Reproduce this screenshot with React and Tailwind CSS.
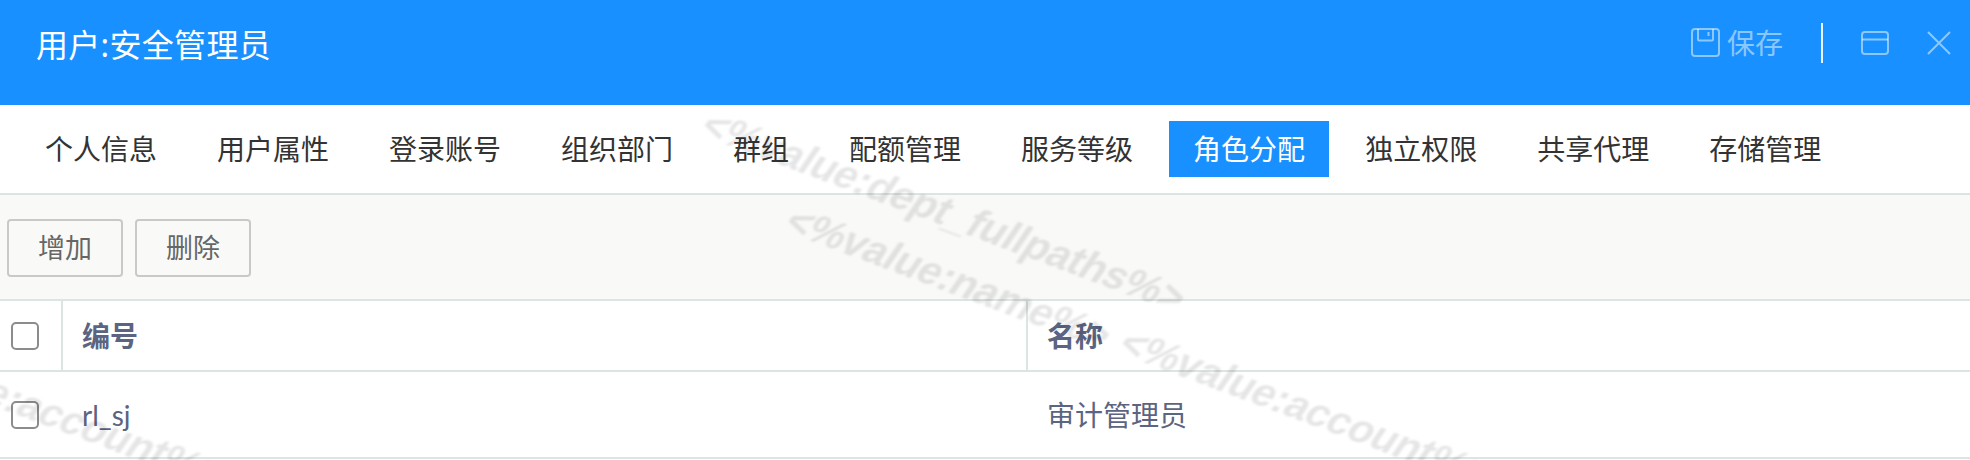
const FONT = "font-['Noto_Sans','Noto_Sans_CJK_SC',sans-serif]";

const tabs = ['个人信息', '用户属性', '登录账号', '组织部门', '群组', '配额管理', '服务等级', '角色分配', '独立权限', '共享代理', '存储管理'];

function SaveIcon() {
  return (
    <svg width="29" height="29" viewBox="0 0 29 29" fill="none" stroke="currentColor" strokeWidth="2">
      <rect x="1" y="1" width="27" height="27" rx="3" />
      <path d="M7 1v10.500a1 1 0 0 0 1 1h13a1 1 0 0 0 1-1V1" />
      <path d="M17.500 4v4" />
    </svg>
  );
}

function WindowIcon() {
  return (
    <svg width="28" height="24" viewBox="0 0 28 24" fill="none" stroke="currentColor" strokeWidth="2">
      <rect x="1" y="1" width="26" height="22" rx="3" />
      <path d="M1 8.500h26" />
    </svg>
  );
}

function CloseIcon() {
  return (
    <svg width="24" height="24" viewBox="0 0 24 24" fill="none" stroke="currentColor" strokeWidth="2">
      <path d="M1 1l22 22M23 1L1 23" />
    </svg>
  );
}

function CheckBox() {
  return <div className="w-[28px] h-[28px] rounded-[5px] border-2 border-[#8c8c8c] bg-transparent" />;
}

function Watermark({ className, children }) {
  return (
    <div className={`absolute origin-top-left rotate-[20.500deg] -skew-x-[14deg] whitespace-nowrap font-['Liberation_Sans',sans-serif] font-bold text-[41px] tracking-[-0.4px] leading-none text-[#000]/10 blur-[0.8px] pointer-events-none ${className}`}>
      {children}
    </div>
  );
}

export default function App() {
  return (
    <div className={`relative w-[1970px] h-[460px] overflow-hidden bg-white ${FONT}`}>
      <div className="h-[105px] bg-[#1890ff] flex items-center pl-[36px] pr-[19px]">
        <div className="text-[32px] tracking-[0.3px] leading-none text-white -mt-[15px]">用户:安全管理员</div>
        <div className="ml-auto flex items-center text-white/50 -mt-[20px]">
          <SaveIcon />
          <span className="ml-[7px] text-[28px] leading-[40px]">保存</span>
          <div className="ml-[38px] w-[2px] h-[40px] bg-white/90" />
          <div className="ml-[38px]"><WindowIcon /></div>
          <div className="ml-[38px]"><CloseIcon /></div>
        </div>
      </div>

      <div className="h-[90px] border-b-2 border-[#dbe5e1] flex gap-3 pl-[21px] pt-[16px]">
        {tabs.map((t) => (
          <div key={t} className={`h-[56px] px-6 flex items-center text-[28px] ${t === '角色分配' ? 'bg-[#1890ff] text-white' : 'text-[#333]'}`}>
            {t}
          </div>
        ))}
      </div>

      <div className="h-[106px] bg-[#f9f9f7] border-b-2 border-[#dbe5e1] flex gap-[12px] pl-[7px] pt-[24px]">
        <button className="w-[116px] h-[58px] border-2 border-[#c9c9c6] rounded-[4px] text-[27px] text-[#666]">增加</button>
        <button className="w-[116px] h-[58px] border-2 border-[#c9c9c6] rounded-[4px] text-[27px] text-[#666]">删除</button>
      </div>

      <div className="h-[71px] border-b-2 border-[#dbe5e1] flex text-[28px] font-bold text-[#5b6480]">
        <div className="w-[63px] border-r-2 border-[#dbe5e1] flex items-center pl-[11px]"><CheckBox /></div>
        <div className="w-[965px] border-r-2 border-[#dbe5e1] flex items-center pl-[19px]">编号</div>
        <div className="flex-1 flex items-center pl-[19px]">名称</div>
      </div>

      <div className="h-[87px] border-b-2 border-[#dbe5e1] flex text-[28px] text-[#5b6480]">
        <div className="w-[63px] flex items-center pl-[11px]"><CheckBox /></div>
        <div className="w-[965px] flex items-center pl-[19px] font-['Lato',sans-serif]">rl_sj</div>
        <div className="flex-1 flex items-center pl-[19px]">审计管理员</div>
      </div>

      <Watermark className="left-[717px] top-[105px]">{'<%value:dept_fullpaths%>'}</Watermark>
      <Watermark className="left-[801px] top-[201px]">{'<%value:name%>'}</Watermark>
      <Watermark className="left-[1135px] top-[323px]">{'<%value:account%>'}</Watermark>
      <Watermark className="-left-[132px] top-[323px]">{'<%value:account%>'}</Watermark>
    </div>
  );
}
